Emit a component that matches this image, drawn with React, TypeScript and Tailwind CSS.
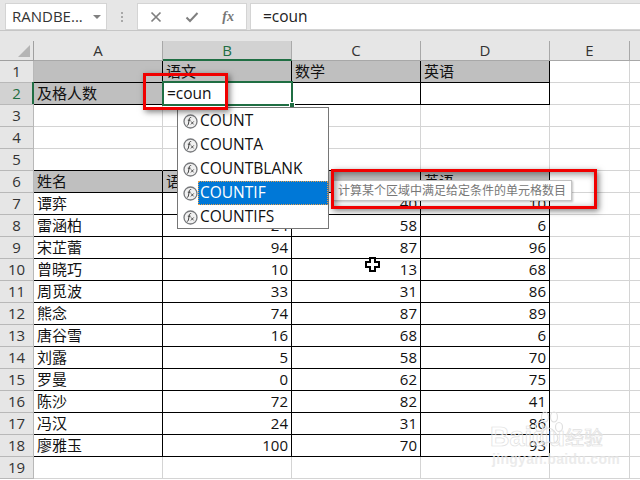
import React from 'react';

const font = `[font-family:"Open_Sans","Noto_Sans_CJK_SC",sans-serif]`;

const cols = ['A', 'B', 'C', 'D', 'E'];
const rows: string[][] = [
  ['', '语文', '数学', '英语'],
  ['及格人数', '', '', ''],
  ['', '', '', ''],
  ['', '', '', ''],
  ['', '', '', ''],
  ['姓名', '语文', '数学', '英语'],
  ['谭弈', '', '40', '10'],
  ['雷涵柏', '24', '58', '6'],
  ['宋芷蕾', '94', '87', '96'],
  ['曾晓巧', '10', '13', '68'],
  ['周觅波', '33', '31', '86'],
  ['熊念', '74', '87', '89'],
  ['唐谷雪', '16', '68', '6'],
  ['刘露', '5', '58', '70'],
  ['罗曼', '0', '62', '75'],
  ['陈沙', '72', '82', '41'],
  ['冯汉', '24', '31', '86'],
  ['廖雅玉', '100', '70', '93'],
  ['', '', '', ''],
];
const funcs = ['COUNT', 'COUNTA', 'COUNTBLANK', 'COUNTIF', 'COUNTIFS'];

const FxIcon = () => (
  <svg width="15" height="15" viewBox="0 0 15 15" className="shrink-0">
    <circle cx="7.5" cy="7.5" r="6.5" fill="#f1f1f1" stroke="#77797c" strokeWidth="1.3" />
    <path d="M8.2 3.6c-1.2-.3-1.7.3-1.9 1.4l-.9 5c-.2 1-.6 1.4-1.5 1.2M4.8 6.2h2.8" fill="none" stroke="#333" strokeWidth=".9" />
    <path d="M8 7.4l2.6 3M10.8 7.4L7.9 10.4" fill="none" stroke="#333" strokeWidth=".8" />
  </svg>
);

const Cell = ({row, col, text}: { row: number, col: number, text: string }) => {
  const inTable = col <= 3 && (row <= 1 || (row >= 5 && row <= 17));
  const aboveTable = col <= 3 && row === 4;
  const head = row === 0 || row === 5;
  const gray = (head && col <= 3) || (row === 1 && col === 0);
  const numeric = row >= 6 && col > 0;
  return (
    <div className={`h-[22px] border-r border-b px-[3px] text-[15px] leading-[21px] whitespace-nowrap overflow-hidden
      ${inTable ? 'border-black' : 'border-[#d4d4d4]'} ${aboveTable ? 'border-b-black' : ''} ${gray ? 'bg-[#bfbfbf] text-[#111]' : 'bg-white text-[#111]'}
      ${numeric ? 'text-right' : 'text-left'}`}>
      {text}
    </div>
  );
};

export default function App() {
  return (
    <div className={`relative w-[640px] h-[480px] overflow-hidden bg-white ${font}`}>
      {/* formula bar */}
      <div className="flex items-stretch h-[31px] pt-[3px] bg-[#e6e6e6] border-b border-[#c6c6c6]">
        <div className="ml-[5px] w-[102px] h-[27px] flex items-center justify-between bg-white border border-[#d4d4d4] pl-[6px] pr-[5px] text-[15px] text-[#333]">
          <span>RANDBE...</span>
          <span className="w-0 h-0 border-x-[4px] border-x-transparent border-t-[4px] border-t-[#808080]" />
        </div>
        <div className="w-[30px] flex flex-col items-center justify-center gap-[2px]">
          <span className="w-[2px] h-[2px] bg-[#a8a8a8]" />
          <span className="w-[2px] h-[2px] bg-[#a8a8a8]" />
          <span className="w-[2px] h-[2px] bg-[#a8a8a8]" />
        </div>
        <div className="w-[110px] h-[27px] flex items-center justify-between pl-[12px] pr-[12px] bg-white border border-[#d4d4d4]">
          <svg width="12" height="12" viewBox="0 0 12 12"><path d="M1.5 1.5l9 9M10.5 1.5l-9 9" stroke="#7f7f7f" strokeWidth="1.7" /></svg>
          <svg width="14" height="12" viewBox="0 0 14 12"><path d="M1.5 6.5l3.5 3.5 7.5-8" fill="none" stroke="#7f7f7f" strokeWidth="2" /></svg>
          <span className="text-[14px] italic font-bold text-[#777] [font-family:'Liberation_Serif',serif]">fx</span>
        </div>
        <div className="ml-[3px] flex-1 h-[27px] flex items-center bg-white border-y border-l border-[#d4d4d4] pl-[12px] text-[15.5px] text-[#222]">=coun</div>
      </div>
      <div className="h-[10px] bg-[#e6e6e6]" />

      {/* sheet */}
      <div className="grid grid-cols-[34px_129px_129px_129px_129px_80px_10px]">
        <div className="h-[20px] bg-[#e6e6e6] border-b border-r border-[#a0a0a0] relative">
          <span className="absolute right-[3px] bottom-[3px] w-0 h-0 border-l-[12px] border-l-transparent border-b-[12px] border-b-[#b4b4b4]" />
        </div>
        {cols.map(c => (
          <div key={c} className={`h-[20px] text-center text-[15px] leading-[19px] border-r
            ${c === 'B' ? 'bg-[#d2d2d2] text-[#1f6e43] border-b-2 border-b-[#1f6e43] border-r-[#aaa]' : 'bg-[#e6e6e6] text-[#333] border-b border-[#a8a8a8]'}`}>{c}</div>
        ))}
        <div className="h-[20px] bg-[#e6e6e6] border-b border-[#a8a8a8]" />
        {rows.map((r, i) => (
          <React.Fragment key={i}>
            <div className={`h-[22px] text-center text-[15px] leading-[21px] border-r border-b border-[#b8b8b8]
              ${i === 1 ? 'bg-[#d2d2d2] text-[#1f6e43]' : 'bg-[#e6e6e6] text-[#333]'}`}>{i + 1}</div>
            {r.map((t, c) => <Cell key={c} row={i} col={c} text={t} />)}
            <Cell row={i} col={4} text="" />
            <div className="h-[22px] border-b border-[#d4d4d4]" />
          </React.Fragment>
        ))}
      </div>

      {/* active cell */}
      <div className="absolute left-[162px] top-[81px] w-[131px] h-[25px] border-2 border-[#1f6e43] bg-white pl-[3px] text-[15.5px] leading-[21px] text-[#111]">=coun</div>
      <div className="absolute left-[289px] top-[102px] w-[6px] h-[6px] bg-[#1f6e43] border border-white" />
      <div className="absolute left-[32px] top-[82px] w-[2px] h-[22px] bg-[#1f6e43]" />

      {/* autocomplete */}
      <div className="absolute left-[177px] top-[107px] w-[152px] h-[122px] bg-white border border-[#767676] pt-[1px]">
        {funcs.map(f => (
          <div key={f} className="h-[24px] flex items-center pl-[5px]">
            <FxIcon />
            <span className={`flex-1 h-[24px] pl-[2px] text-[15.5px] leading-[23px] ${f === 'COUNTIF' ? 'bg-[#0078d7] text-white outline-1 outline-dotted outline-offset-[-1px] outline-[#e8a04c]' : 'text-[#111]'}`}>{f}</span>
          </div>
        ))}
      </div>

      {/* tooltip */}
      <div className="absolute left-[333px] top-[180px] w-[239px] h-[21px] bg-white border border-[#c4c4c4] shadow-[1px_1px_2px_rgba(0,0,0,0.25)] pl-[4px] text-[12px] leading-[18px] text-[#777] whitespace-nowrap [font-family:'Noto_Sans_CJK_SC',sans-serif]">计算某个区域中满足给定条件的单元格数目</div>

      {/* red callouts */}
      <div className="absolute left-[143px] top-[73px] w-[85px] h-[37px] border-[3px] border-[#f00000] shadow-[2px_2px_6px_rgba(0,0,0,0.5)]" />
      <div className="absolute left-[331px] top-[169px] w-[266px] h-[40px] border-[3px] border-[#f00000] shadow-[2px_2px_6px_rgba(0,0,0,0.5),inset_2px_2px_7px_rgba(0,0,0,0.45)]" />

      {/* cursor */}
      <svg className="absolute left-[365px] top-[257px]" width="15" height="15" viewBox="0 0 15 15">
        <path d="M5 1h5v4h4v5h-4v4H5v-4H1V5h4z" fill="#fff" stroke="#000" strokeWidth="2" />
      </svg>

      {/* watermark */}
      <div className="absolute left-[490px] top-[421px] text-[27px] leading-[32px] font-bold text-white/40 [-webkit-text-stroke:0.7px_#e0e0e0] [font-family:'Liberation_Sans',sans-serif]">Baidu</div>
      <svg className="absolute left-[533px] top-[410px] text-[#e0e0e0]" width="30" height="37" viewBox="0 0 30 37" fill="none" stroke="currentColor" strokeWidth="1.2">
        <ellipse cx="6" cy="17" rx="3.5" ry="4.5" />
        <ellipse cx="12" cy="7" rx="3.5" ry="5" />
        <ellipse cx="21" cy="7" rx="3.5" ry="5" />
        <ellipse cx="26" cy="17" rx="3.5" ry="4.5" />
        <path d="M15 18c-4 0-5 4-7 7-2 4 0 8 4 8 2 0 3-1 4-1s2 1 4 1c4 0 6-4 4-8-2-3-4-7-9-7z" />
      </svg>
      <div className="absolute left-[565px] top-[426px] text-[19px] leading-[22px] text-white/40 [-webkit-text-stroke:0.7px_#e0e0e0] [font-family:'Noto_Sans_CJK_SC',sans-serif]">经验</div>
      <div className="absolute left-[492px] top-[451px] text-[14px] leading-[16px] font-bold tracking-[0.3px] text-[#e6e6e6]/80 [font-family:'Liberation_Sans',sans-serif]">jingyan.baidu.com</div>
    </div>
  );
}
